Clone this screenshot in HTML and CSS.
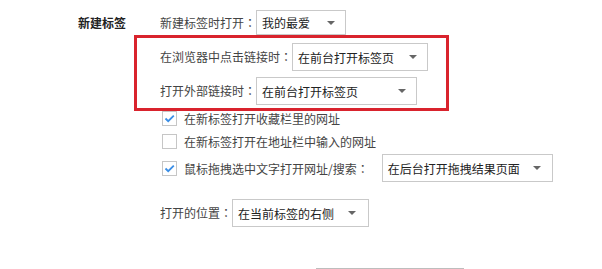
FILE: index.html
```html
<!DOCTYPE html>
<html lang="zh-CN">
<head>
<meta charset="utf-8">
<title>新建标签</title>
<link rel="stylesheet" href="styles.css">
</head>
<body>
<div class="page">
  <div class="section">
    <div class="title">新建标签</div>
    <div class="content">
      <div class="row row-first">
        <span class="label">新建标签时打开<span class="colon">：</span></span>
        <div class="select sel-fav"><span>我的最爱</span><i class="arrow"></i></div>
      </div>
      <div class="highlight">
        <div class="row">
          <span class="label">在浏览器中点击链接时<span class="colon">：</span></span>
          <div class="select sel-click"><span>在前台打开标签页</span><i class="arrow"></i></div>
        </div>
        <div class="row row-ext">
          <span class="label">打开外部链接时<span class="colon">：</span></span>
          <div class="select sel-ext"><span>在前台打开标签页</span><i class="arrow"></i></div>
        </div>
      </div>
      <div class="check check-1">
        <span class="box checked"><svg viewBox="0 0 13 13" width="13" height="13"><polyline points="2.5,6.5 5.2,9.2 10.8,3.6" fill="none" stroke="#3a8ee6" stroke-width="1.8"/></svg></span>
        <span class="ctext">在新标签打开收藏栏里的网址</span>
      </div>
      <div class="check check-2">
        <span class="box"></span>
        <span class="ctext">在新标签打开在地址栏中输入的网址</span>
      </div>
      <div class="check check-3">
        <span class="box checked"><svg viewBox="0 0 13 13" width="13" height="13"><polyline points="2.5,6.5 5.2,9.2 10.8,3.6" fill="none" stroke="#3a8ee6" stroke-width="1.8"/></svg></span>
        <span class="ctext drag-label">鼠标拖拽选中文字打开网址/搜索<span class="colon">：</span></span>
        <div class="select sel-drag"><span>在后台打开拖拽结果页面</span><i class="arrow"></i></div>
      </div>
      <div class="row row-pos">
        <span class="label">打开的位置<span class="colon">：</span></span>
        <div class="select sel-pos"><span>在当前标签的右侧</span><i class="arrow"></i></div>
      </div>
      <div class="next"></div>
    </div>
  </div>
</div>
</body>
</html>
```

FILE: styles.css
```css
html, body {
  margin: 0;
  padding: 0;
  background: #ffffff;
}

body {
  font-family: "Noto Sans CJK SC", "Noto Sans", sans-serif;
  font-size: 12px;
  color: #444444;
  overflow: hidden;
}

.page {
  padding-top: 10px;
  padding-left: 78px;
}

.section {
  display: flex;
}

.title {
  width: 82px;
  height: 25px;
  line-height: 25px;
  font-weight: bold;
  color: #222222;
  flex: none;
}

.content {
  display: flex;
  flex-direction: column;
  align-items: flex-start;
}

.row {
  display: flex;
  align-items: center;
  height: 28px;
}

.row-first {
  height: 25px;
}

.label {
  white-space: nowrap;
  line-height: 28px;
}

.colon {
  display: inline-block;
  width: 12px;
  text-align: center;
  font-family: "Noto Sans CJK TC", "Noto Sans CJK SC", sans-serif;
}

.select {
  box-sizing: border-box;
  display: flex;
  align-items: center;
  justify-content: space-between;
  height: 28px;
  border: 1px solid #c9c9c9;
  background: #ffffff;
  padding: 0 10px 0 5px;
  color: #222222;
  white-space: nowrap;
}

.row-first .select {
  height: 25px;
}

.arrow {
  display: block;
  width: 0;
  height: 0;
  border-left: 4px solid transparent;
  border-right: 4px solid transparent;
  border-top: 4px solid #666666;
}

.sel-fav { width: 90px; }
.sel-click { width: 136px; }
.sel-ext { width: 161px; }
.sel-drag { width: 171px; padding-right: 11px; }
.sel-pos { width: 137px; padding-right: 12px; }

.highlight {
  box-sizing: border-box;
  width: 315px;
  margin-left: -26px;
  border: 3px solid #d9232d;
  padding: 5px 0 3px 23px;
  display: flex;
  flex-direction: column;
  align-items: flex-start;
}

.row-ext {
  margin-top: 6px;
}

.check {
  display: flex;
  align-items: center;
  padding-left: 2px;
}

.box {
  box-sizing: border-box;
  width: 15px;
  height: 15px;
  border: 1px solid #c6c6c6;
  background: #ffffff;
  display: flex;
  align-items: center;
  justify-content: center;
  flex: none;
}

.box svg {
  display: block;
}

.ctext {
  margin-left: 7px;
  white-space: nowrap;
  line-height: 15px;
}

.check-1 {
  height: 15px;
  margin-top: 0;
}

.check-2 {
  height: 15px;
  margin-top: 8px;
}

.check-3 {
  height: 28px;
  margin-top: 5px;
}

.drag-label {
  margin-right: 13px;
}

.row-pos {
  margin-top: 17px;
}

.next {
  margin-top: 41px;
  margin-left: 156px;
  width: 148px;
  height: 1px;
  border-top: 1px solid #bdbdbd;
}
```
